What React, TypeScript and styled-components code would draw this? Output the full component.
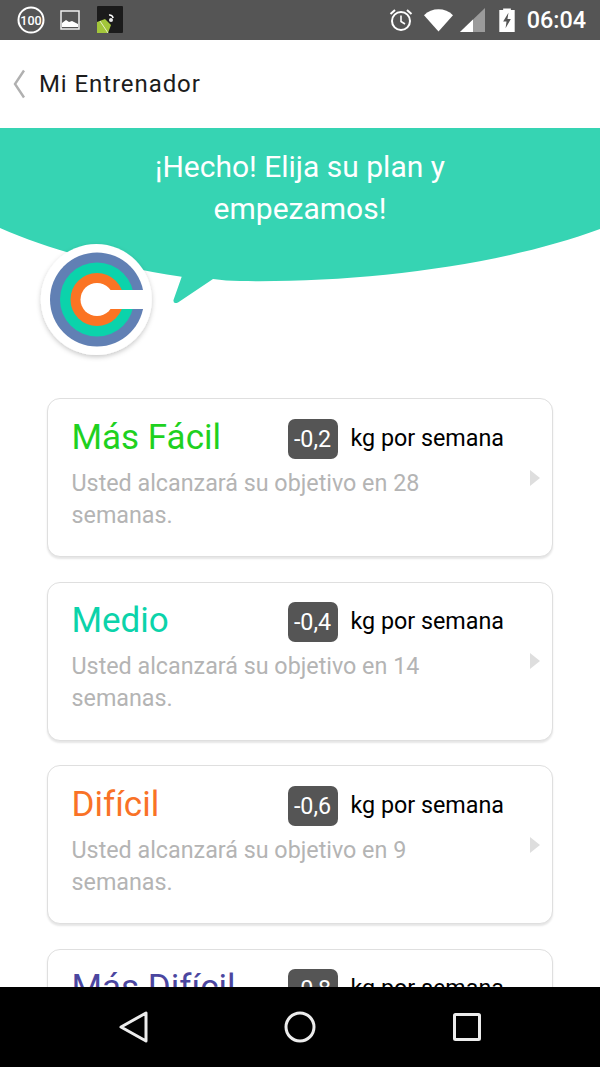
import React from "react";
import styled, { createGlobalStyle } from "styled-components";

const Global = createGlobalStyle`
  html, body { margin: 0; padding: 0; background: #fff; }
  * { box-sizing: border-box; }
`;

const Page = styled.div`
  width: 600px;
  height: 1067px;
  display: flex;
  flex-direction: column;
  overflow: hidden;
  background: #fff;
  font-family: Roboto, "Liberation Sans", sans-serif;
`;

const StatusBar = styled.div`
  height: 40px;
  flex: none;
  background: #555555;
  display: flex;
  align-items: center;
  padding: 0 14px 0 17px;
  color: #fff;
`;
const StatusLeft = styled.div`
  display: flex;
  align-items: center;
  gap: 14px;
  flex: 1;
`;
const StatusRight = styled.div`
  display: flex;
  align-items: center;
`;
const Clock = styled.span`
  font-size: 23.4px;
  font-weight: 500;
  margin-left: 11.5px;
  line-height: 40px;
`;

const Header = styled.div`
  height: 88px;
  flex: none;
  display: flex;
  align-items: center;
  padding-left: 13px;
  gap: 14px;
`;
const Title = styled.h1`
  margin: 0;
  font-size: 24px;
  font-weight: 400;
  letter-spacing: 0.92px;
  color: #1c1c1c;
`;

const Scroll = styled.div`
  flex: 1;
  min-height: 0;
  overflow: hidden;
`;

const Hero = styled.section`
  position: relative;
  height: 270px;
  padding-top: 18px;
`;
const BubbleArt = styled.svg`
  position: absolute;
  left: 0;
  top: 0;
`;
const HeroText = styled.p`
  position: relative;
  margin: 0 auto;
  width: 340px;
  text-align: center;
  color: #fff;
  font-size: 30px;
  line-height: 42px;
`;
const LogoBadge = styled.svg`
  position: absolute;
  left: 32px;
  top: 106px;
  overflow: visible;
`;

const CardList = styled.div`
  display: flex;
  flex-direction: column;
  gap: 24.5px;
  padding: 0 47px;
`;
const Card = styled.article`
  height: 159px;
  flex: none;
  border: 1.5px solid #dfdfdf;
  border-radius: 13px;
  background: #fff;
  box-shadow: 0 2px 2px rgba(0, 0, 0, 0.1);
  display: flex;
  align-items: center;
  padding: 0 12.5px 0 23.5px;
`;
const CardMain = styled.div`
  flex: 1;
  align-self: flex-start;
  padding-top: 19.5px;
`;
const CardTop = styled.div`
  display: flex;
  align-items: center;
  height: 40px;
`;
const Level = styled.h2<{ $color: string }>`
  margin: 0 0 3px;
  width: 216px;
  font-size: 35px;
  font-weight: 400;
  color: ${(p) => p.$color};
`;
const Badge = styled.span`
  width: 50px;
  height: 40px;
  border-radius: 7px;
  background: #555555;
  color: #fff;
  font-size: 23.3px;
  display: flex;
  align-items: center;
  justify-content: center;
`;
const Rate = styled.span`
  margin-left: 13px;
  margin-bottom: 2px;
  font-size: 23.3px;
  color: #000;
`;
const Desc = styled.p`
  margin: 8px 0 0;
  width: 420px;
  font-size: 23.3px;
  line-height: 32px;
  color: #b4b4b4;
`;
const Arrow = styled.span`
  width: 0;
  height: 0;
  flex: none;
  border-left: 10px solid #dedede;
  border-top: 8px solid transparent;
  border-bottom: 8px solid transparent;
`;

const NavBar = styled.nav`
  height: 80px;
  flex: none;
  background: #000;
  display: grid;
  grid-template-columns: repeat(3, 166.5px);
  justify-content: center;
  justify-items: center;
  align-items: center;
`;

const plans = [
  { name: "Más Fácil", color: "#1fd11f", rate: "-0,2", weeks: 28 },
  { name: "Medio", color: "#0bd3aa", rate: "-0,4", weeks: 14 },
  { name: "Difícil", color: "#f97226", rate: "-0,6", weeks: 9 },
  { name: "Más Difícil", color: "#4b469f", rate: "-0,8", weeks: 7 },
];

export default function App() {
  return (
    <Page>
      <Global />
      <StatusBar>
        <StatusLeft>
          <svg width="28" height="28" viewBox="0 0 28 28">
            <circle cx="14" cy="14" r="12.5" fill="none" stroke="#fff" strokeWidth="2" />
            <text x="14" y="18.5" textAnchor="middle" fontSize="12.5" fontWeight="500" fontFamily="Roboto, sans-serif" fill="#fff">100</text>
          </svg>
          <svg width="22" height="22" viewBox="0 0 22 22">
            <rect x="2" y="2" width="18" height="18" fill="none" stroke="#eee" strokeWidth="1.5" />
            <path d="M3 17 L3 14 L7 11 L10 13 L13 12 L19 15 L19 18 L3 18Z" fill="#fff" />
          </svg>
          <svg width="26" height="28" viewBox="0 0 26 28" style={{ marginLeft: 2 }}>
            <rect width="26" height="27" rx="1" fill="#1b1b1b" />
            <path d="M0 16 L8 13 L14 19 L11 27 L0 27Z" fill="#a3c63a" />
            <path d="M3 15 L11 27" stroke="#e6efc8" strokeWidth="1" />
            <circle cx="14" cy="14" r="2" fill="#e8e8e8" />
            <path d="M12 9 A3.5 3.5 0 0 1 16 12" fill="none" stroke="#fff" strokeWidth="1.6" />
          </svg>
        </StatusLeft>
        <StatusRight>
          <svg width="24" height="26" viewBox="1 0 24 26">
            <circle cx="13" cy="14" r="9" fill="none" stroke="#fff" strokeWidth="2" />
            <path d="M13 8.5 V14.5 L17 17" fill="none" stroke="#fff" strokeWidth="1.6" />
            <path d="M2.5 7 L7 3 M23.5 7 L19 3" stroke="#fff" strokeWidth="2" />
          </svg>
          <svg width="29" height="24" viewBox="0 0 30 24" style={{ marginLeft: 11 }}>
            <path d="M0 7 C8 -1 22 -1 30 7 L15 24Z" fill="#fff" />
          </svg>
          <svg width="26" height="25" viewBox="0 0 26 25" style={{ marginLeft: 7 }}>
            <path d="M0 24 L25 0 V24Z" fill="#9b9b9b" />
            <path d="M0 24 L13 11.5 V24Z" fill="#fff" />
          </svg>
          <svg width="16" height="25" viewBox="0 0 16 26" style={{ marginLeft: 13 }}>
            <path fillRule="evenodd" d="M4 2 V0.5 H12 V2 H16 V25 H0 V2Z M9.5 5 L4 14 H7.5 L6.5 21 L12 11.5 H8.5Z" fill="#fff" />
          </svg>
          <Clock>06:04</Clock>
        </StatusRight>
      </StatusBar>

      <Header>
        <svg width="12" height="30" viewBox="0 0 12 30">
          <path d="M11 1.5 L2 15 L11 28.5" fill="none" stroke="#b0b0b0" strokeWidth="2.4" />
        </svg>
        <Title>Mi Entrenador</Title>
      </Header>

      <Scroll>
        <Hero>
          <BubbleArt width="600" height="180" viewBox="0 0 600 180">
            <path
              d="M0 0 H600 V101 C500 138 360 155 240 153 C230 153 222 152 213 151 L178 174.5 Q173 176.5 173.5 172 L181.7 148.7 C110 138 50 122 0 100Z"
              fill="#36d4b3"
            />
          </BubbleArt>
          <HeroText>¡Hecho! Elija su plan y empezamos!</HeroText>
          <LogoBadge width="130" height="130" viewBox="0 0 130 130">
            <defs>
              <filter id="logo-shadow" x="-20%" y="-20%" width="140%" height="140%">
                <feDropShadow dx="0" dy="2" stdDeviation="2.5" floodColor="#000" floodOpacity="0.22" />
              </filter>
            </defs>
            <circle cx="64.3" cy="65.5" r="55.5" fill="#fff" filter="url(#logo-shadow)" />
            <circle cx="65" cy="65.5" r="47" fill="#6180b4" />
            <circle cx="65" cy="65.5" r="37" fill="#0bd3ab" />
            <circle cx="65" cy="65.5" r="26.5" fill="#fb7423" />
            <circle cx="65" cy="65.5" r="16.5" fill="#fff" />
            <rect x="65" y="56" width="48" height="19" fill="#fff" />
          </LogoBadge>
        </Hero>

        <CardList>
          {plans.map((p) => (
            <Card key={p.name}>
              <CardMain>
                <CardTop>
                  <Level $color={p.color}>{p.name}</Level>
                  <Badge>{p.rate}</Badge>
                  <Rate>kg por semana</Rate>
                </CardTop>
                <Desc>Usted alcanzará su objetivo en {p.weeks} semanas.</Desc>
              </CardMain>
              <Arrow />
            </Card>
          ))}
        </CardList>
      </Scroll>

      <NavBar>
        <svg width="32" height="34" viewBox="0 0 32 34">
          <path d="M28 3 V31 L3 17Z" fill="none" stroke="#ececec" strokeWidth="3" strokeLinejoin="round" />
        </svg>
        <svg width="32" height="32" viewBox="0 0 32 32">
          <circle cx="16" cy="16" r="14" fill="none" stroke="#ececec" strokeWidth="3" />
        </svg>
        <svg width="28" height="28" viewBox="0 0 28 28">
          <rect x="1.5" y="1.5" width="25" height="25" rx="1" fill="none" stroke="#ececec" strokeWidth="3" />
        </svg>
      </NavBar>
    </Page>
  );
}
